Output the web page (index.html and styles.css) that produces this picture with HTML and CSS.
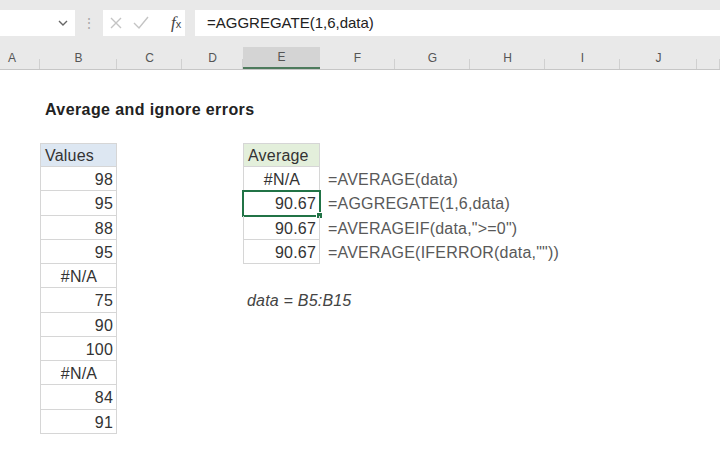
FILE: index.html
```html
<!DOCTYPE html>
<html lang="en">
<head>
    <meta charset="UTF-8">
    <meta name="viewport" content="width=device-width, initial-scale=1.0">
    <title>Average and ignore errors</title>
    <link rel="stylesheet" href="styles.css">
</head>
<body>
    <div class="formula-bar">
        <div class="name-box">
            <svg class="chevron" width="10" height="6" viewBox="0 0 10 6"><path d="M1 1 L5 5 L9 1" fill="none" stroke="#666" stroke-width="1.4"/></svg>
        </div>
        <div class="grip">⋮</div>
        <div class="fx-buttons">
            <svg width="14" height="14" viewBox="0 0 14 14"><path d="M2 2 L12 12 M12 2 L2 12" stroke="#c4c4c4" stroke-width="1.4"/></svg>
            <svg width="16" height="14" viewBox="0 0 16 14"><path d="M1 7 L6 12 L15 1" fill="none" stroke="#c4c4c4" stroke-width="1.4"/></svg>
            <span class="fx"><i>f</i><span class="fx-x">x</span></span>
        </div>
        <div class="formula-input">=AGGREGATE(1,6,data)</div>
    </div>

    <div class="col-headers">
        <div class="col-h">A</div>
        <div class="col-h">B</div>
        <div class="col-h">C</div>
        <div class="col-h">D</div>
        <div class="col-h active">E</div>
        <div class="col-h">F</div>
        <div class="col-h">G</div>
        <div class="col-h">H</div>
        <div class="col-h">I</div>
        <div class="col-h">J</div>
        <div class="col-h"></div>
    </div>

    <div class="sheet">
        <div class="title">Average and ignore errors</div>

        <div class="cell head blue col-b row-4">Values</div>
        <div class="cell num col-b row-5">98</div>
        <div class="cell num col-b row-6">95</div>
        <div class="cell num col-b row-7">88</div>
        <div class="cell num col-b row-8">95</div>
        <div class="cell err col-b row-9">#N/A</div>
        <div class="cell num col-b row-10">75</div>
        <div class="cell num col-b row-11">90</div>
        <div class="cell num col-b row-12">100</div>
        <div class="cell err col-b row-13">#N/A</div>
        <div class="cell num col-b row-14">84</div>
        <div class="cell num col-b row-15">91</div>

        <div class="cell head green col-e row-4">Average</div>
        <div class="cell err col-e row-5">#N/A</div>
        <div class="cell num col-e row-6 selected">90.67</div>
        <div class="cell num col-e row-7">90.67</div>
        <div class="cell num col-e row-8">90.67</div>

        <div class="formula row-5">=AVERAGE(data)</div>
        <div class="formula row-6">=AGGREGATE(1,6,data)</div>
        <div class="formula row-7">=AVERAGEIF(data,"&gt;=0")</div>
        <div class="formula row-8">=AVERAGE(IFERROR(data,""))</div>

        <div class="note row-10">data = B5:B15</div>
    </div>
</body>
</html>
```

FILE: styles.css
```css
body {
    margin: 0;
    width: 720px;
    height: 471px;
    overflow: hidden;
    background: #fff;
    font-family: "Liberation Sans", Arial, sans-serif;
    color: #333;
}

/* formula bar */
.formula-bar {
    display: flex;
    align-items: center;
    height: 47px;
    box-sizing: border-box;
    padding: 10px 0 11px;
    background: #e9e9e9;
}
.name-box {
    width: 75px;
    height: 26px;
    background: #fff;
    display: flex;
    align-items: center;
    justify-content: flex-end;
    padding-right: 7px;
    box-sizing: border-box;
}
.grip {
    width: 28px;
    text-align: center;
    color: #aaa;
    font-size: 14px;
}
.fx-buttons {
    width: 82px;
    height: 26px;
    background: #fff;
    display: flex;
    align-items: center;
    gap: 10px;
    padding-left: 6px;
    box-sizing: border-box;
}
.fx {
    margin-left: 12px;
    font-family: "Liberation Serif", serif;
    font-size: 17px;
    color: #444;
}
.fx-x {
    font-size: 11px;
    font-family: "Liberation Sans", sans-serif;
}
.formula-input {
    flex: 1;
    margin-left: 10px;
    height: 26px;
    line-height: 26px;
    background: #fff;
    padding-left: 12px;
    font-size: 15px;
    color: #222;
}

/* column headers */
.col-headers,
.sheet {
    display: grid;
    grid-template-columns: 40px 77px 65px 61px 77px 75px 75px 75px 75px 77px 1fr;
}
.col-headers {
    height: 22px;
    background: #e9e9e9;
    border-bottom: 1px solid #c6c6c6;
}
.col-h {
    font-size: 12px;
    color: #555;
    text-align: center;
    line-height: 22px;
    background: linear-gradient(#d0d0d0, #d0d0d0) right bottom / 1px 10px no-repeat;
}
.col-h:first-child {
    text-align: left;
    padding-left: 8px;
}
.col-h.active {
    background: #d4d4d4;
    border-bottom: 2px solid #4d7a5c;
    line-height: 20px;
}

/* sheet body */
.sheet {
    grid-template-rows: repeat(16, 24.27px);
    font-size: 16px;
    letter-spacing: 0.2px;
}
.title {
    grid-column: 2 / 6;
    grid-row: 2;
    padding: 4px 0 0 5px;
    line-height: 24px;
    font-weight: bold;
    letter-spacing: 0.4px;
    color: #222;
}
.cell {
    box-sizing: border-box;
    border: 1px solid #d6d6d6;
    border-top: none;
    padding: 2px 3px 0 4px;
    line-height: 21px;
    position: relative;
}
.head {
    border-top: 1px solid #d6d6d6;
    line-height: 20px;
}
.blue { background: #dde7f2; }
.green { background: #e3efdb; }
.num { text-align: right; }
.err { text-align: center; }
.col-b { grid-column: 2; }
.col-e { grid-column: 5; }
.row-4 { grid-row: 4; }
.row-5 { grid-row: 5; }
.row-6 { grid-row: 6; }
.row-7 { grid-row: 7; }
.row-8 { grid-row: 8; }
.row-9 { grid-row: 9; }
.row-10 { grid-row: 10; }
.row-11 { grid-row: 11; }
.row-12 { grid-row: 12; }
.row-13 { grid-row: 13; }
.row-14 { grid-row: 14; }
.row-15 { grid-row: 15; }

.selected {
    outline: 2px solid #217346;
    outline-offset: -1px;
}
.selected::after {
    content: "";
    position: absolute;
    right: -4px;
    bottom: -4px;
    width: 5px;
    height: 5px;
    background: #217346;
    border: 1px solid #fff;
}

.formula {
    grid-column: 6 / 11;
    padding: 2px 0 0 8px;
    line-height: 22px;
    color: #595959;
}
.note {
    grid-column: 5 / 8;
    padding: 2px 0 0 4px;
    line-height: 22px;
    font-style: italic;
    color: #444;
}
```
